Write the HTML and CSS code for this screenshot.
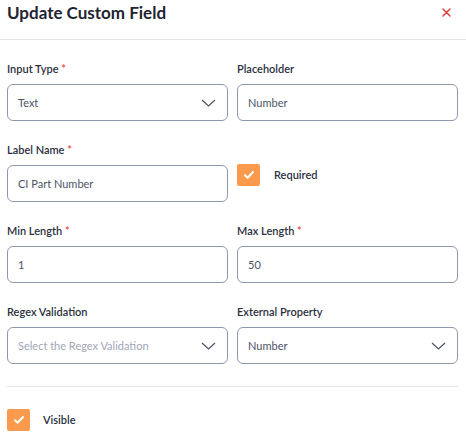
FILE: index.html
```html
<!DOCTYPE html>
<html lang="en">
<head>
    <meta charset="UTF-8">
    <meta name="viewport" content="width=device-width, initial-scale=1.0">
    <title>Update Custom Field</title>
    <link rel="stylesheet" href="styles.css">
</head>
<body>
    <div class="modal">
        <div class="modal-header">
            <h2>Update Custom Field</h2>
            <button class="close-btn" aria-label="Close">
                <svg width="9" height="9" viewBox="0 0 9 9"><path d="M1 1L8 8M8 1L1 8" stroke="#e03e3e" stroke-width="1.5" stroke-linecap="round"/></svg>
            </button>
        </div>

        <div class="modal-body">
            <div class="form-grid">
                <div class="field">
                    <label>Input Type <span class="req">*</span></label>
                    <div class="control select">
                        <span>Text</span>
                        <svg class="chevron" width="15" height="8" viewBox="0 0 15 8"><path d="M1 1L7.5 7L14 1" fill="none" stroke="#4b5366" stroke-width="1.2"/></svg>
                    </div>
                </div>
                <div class="field">
                    <label>Placeholder</label>
                    <div class="control"><span>Number</span></div>
                </div>

                <div class="field">
                    <label>Label Name <span class="req">*</span></label>
                    <div class="control"><span>CI Part Number</span></div>
                </div>
                <div class="field field-check">
                    <div class="check-row">
                        <span class="checkbox">
                            <svg width="12" height="10" viewBox="0 0 12 10"><path d="M2 5.2L4.6 7.8L10 2" fill="none" stroke="#fff" stroke-width="2" stroke-linecap="round" stroke-linejoin="round"/></svg>
                        </span>
                        <span class="check-label">Required</span>
                    </div>
                </div>

                <div class="field">
                    <label>Min Length <span class="req">*</span></label>
                    <div class="control"><span>1</span></div>
                </div>
                <div class="field">
                    <label>Max Length <span class="req">*</span></label>
                    <div class="control"><span>50</span></div>
                </div>

                <div class="field">
                    <label>Regex Validation</label>
                    <div class="control select">
                        <span class="placeholder">Select the Regex Validation</span>
                        <svg class="chevron" width="15" height="8" viewBox="0 0 15 8"><path d="M1 1L7.5 7L14 1" fill="none" stroke="#4b5366" stroke-width="1.2"/></svg>
                    </div>
                </div>
                <div class="field">
                    <label>External Property</label>
                    <div class="control select">
                        <span>Number</span>
                        <svg class="chevron" width="15" height="8" viewBox="0 0 15 8"><path d="M1 1L7.5 7L14 1" fill="none" stroke="#4b5366" stroke-width="1.2"/></svg>
                    </div>
                </div>
            </div>

            <hr class="divider">

            <div class="check-row visible-row">
                <span class="checkbox">
                    <svg width="12" height="10" viewBox="0 0 12 10"><path d="M2 5.2L4.6 7.8L10 2" fill="none" stroke="#fff" stroke-width="2" stroke-linecap="round" stroke-linejoin="round"/></svg>
                </span>
                <span class="check-label">Visible</span>
            </div>
        </div>
    </div>
</body>
</html>
```

FILE: styles.css
```css
body {
    margin: 0;
    font-family: Lato, "Open Sans", Arial, sans-serif;
    color: #1f2433;
    background: #fff;
}
.modal {
    width: 466px;
}
.modal-header {
    display: flex;
    justify-content: space-between;
    align-items: flex-start;
    height: 40px;
    padding: 2px 15px 0 7px;
    border-bottom: 1px solid #e4e4e4;
    box-sizing: border-box;
}
.modal-header h2 {
    margin: 0;
    font-size: 17px;
    line-height: 22px;
    font-weight: 700;
    color: #1f2433;
}
.close-btn {
    background: none;
    border: none;
    padding: 0;
    margin-top: 6px;
    cursor: pointer;
    line-height: 0;
}
.modal-body {
    padding: 22px 8px 0 7px;
}
.form-grid {
    display: grid;
    grid-template-columns: 1fr 1fr;
    column-gap: 9px;
    row-gap: 22px;
}
.field label {
    display: block;
    font-size: 11px;
    line-height: 14px;
    font-weight: 600;
    color: #2a2f3d;
    margin-bottom: 8px;
}
.req {
    color: #ef4444;
}
.control {
    display: flex;
    align-items: center;
    justify-content: space-between;
    height: 37px;
    padding: 0 11px 0 10px;
    border: 1px solid #8e98ad;
    border-radius: 6px;
    box-sizing: border-box;
    font-size: 11px;
    color: #4b5366;
}
.control .placeholder {
    color: #9ea6b8;
}
.chevron {
    flex-shrink: 0;
}
.field-check {
    padding-top: 21px;
}
.check-row {
    display: flex;
    align-items: center;
}
.checkbox {
    display: flex;
    align-items: center;
    justify-content: center;
    width: 23px;
    height: 22px;
    background: #fb9a4c;
    border-radius: 2px;
}
.check-label {
    font-size: 11px;
    font-weight: 600;
    color: #2a2f3d;
    margin-left: 14px;
    margin-top: -2px;
}
.visible-row .check-label {
    margin-left: 13px;
}
.divider {
    border: none;
    border-top: 1px solid #e4e4e4;
    margin: 22px 0 22px;
}
```
